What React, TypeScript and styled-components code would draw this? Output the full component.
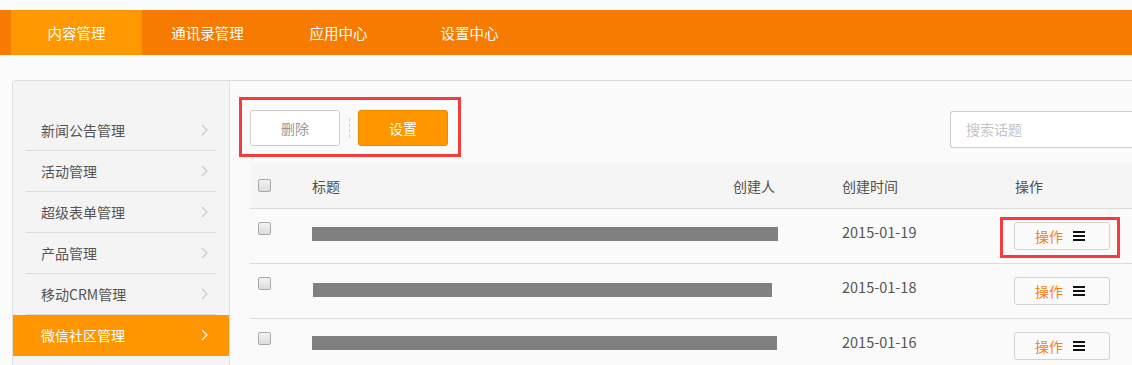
import React from 'react';
import styled, { createGlobalStyle } from 'styled-components';

const GlobalStyle = createGlobalStyle`
  html, body {
    margin: 0;
    padding: 0;
    overflow: hidden;
    background: #fbfbfb;
  }
  * {
    box-sizing: border-box;
  }
  body {
    font-family: "Noto Sans CJK SC", "Noto Sans", sans-serif;
    font-size: 14px;
    color: #555;
  }
`;

const Page = styled.div`
  padding-top: 10px;
  width: 1132px;
  height: 365px;
  overflow: hidden;
`;

const TopBar = styled.nav`
  display: flex;
  height: 45px;
  padding-left: 11px;
  background: #f77b00;
`;

const Tab = styled.div<{ active?: boolean }>`
  display: flex;
  align-items: center;
  justify-content: center;
  width: 131px;
  color: #fff;
  font-size: 14.5px;
  background: ${({ active }) => (active ? '#ff9700' : 'transparent')};
`;

const Panel = styled.div`
  display: flex;
  width: 1140px;
  min-height: 320px;
  margin: 25px 0 0 12px;
  border: 1px solid #dcdcdc;
  border-radius: 4px;
  overflow: hidden;
`;

const Sidebar = styled.aside`
  width: 217px;
  flex-shrink: 0;
  padding-top: 29px;
  background: #f4f4f4;
  border-right: 1px solid #e0e0e0;
`;

const MenuItem = styled.div<{ active?: boolean }>`
  display: flex;
  align-items: center;
  justify-content: space-between;
  height: 41px;
  margin: ${({ active }) => (active ? '0' : '0 13px')};
  padding: ${({ active }) => (active ? '0 21px 0 28px' : '0 8px 0 15px')};
  border-bottom: 1px solid ${({ active }) => (active ? 'transparent' : '#dadada')};
  background: ${({ active }) => (active ? '#ff9600' : 'transparent')};
  color: ${({ active }) => (active ? '#fff' : '#555')};
`;

const Content = styled.main`
  flex: 1;
  padding: 16px 0 0 20px;
  background: #fafafa;
`;

const Toolbar = styled.div`
  display: flex;
  align-items: flex-start;
  height: 60px;
`;

const ButtonGroup = styled.div`
  display: flex;
  align-items: center;
  margin-left: -11px;
  padding: 10px 10px 8px 8px;
  border: 3px solid #f53b3b;
`;

const ToolButton = styled.button<{ primary?: boolean }>`
  width: 90px;
  height: 36px;
  border-radius: 3px;
  font-family: inherit;
  font-size: 14px;
  border: 1px solid ${({ primary }) => (primary ? '#e88a00' : '#cfcfcf')};
  background: ${({ primary }) => (primary ? '#ff9600' : '#fff')};
  color: ${({ primary }) => (primary ? '#fff' : '#999')};
`;

const DashedSep = styled.span`
  width: 0;
  height: 20px;
  margin: 0 8px 0 9px;
  border-left: 1px dashed #ccc;
`;

const SearchInput = styled.input`
  width: 201px;
  height: 37px;
  margin: 14px 0 0 auto;
  padding: 0 15px 2px;
  border: 1px solid #cdcdcd;
  border-right: none;
  border-radius: 3px 0 0 3px;
  background: #fff;
  font-family: inherit;
  font-size: 14px;
  outline: none;
  &::placeholder {
    color: #c4c4c4;
  }
`;

const Table = styled.div`
  margin-top: 6px;
`;

const gridCols = '62px 400px 68px 62px 172px 1fr';

const HeadRow = styled.div`
  display: grid;
  grid-template-columns: ${gridCols};
  align-items: center;
  height: 46px;
  background: #f5f5f5;
  border-bottom: 1px solid #dcdcdc;
  color: #505050;
`;

const Row = styled.div`
  display: grid;
  grid-template-columns: ${gridCols};
  align-items: start;
  height: 55px;
  padding-top: 13px;
  border-bottom: 1px solid #dcdcdc;
`;

const CheckCell = styled.div`
  padding-left: 8px;
  display: flex;
`;

const Checkbox = styled.span`
  display: block;
  width: 13px;
  height: 13px;
  border: 1px solid #a9a9a9;
  border-radius: 2px;
  background: linear-gradient(#f2f2f2, #dcdcdc);
`;

const CreatorHead = styled.div`
  text-align: right;
  padding-right: 5px;
`;

const DateHead = styled.div`
  grid-column: 5;
`;

const OpHead = styled.div`
  padding-left: 1px;
`;

const Redacted = styled.div<{ offset: number; inset: number }>`
  grid-column: 2 / 4;
  height: 14px;
  margin-top: ${({ offset }) => offset}px;
  margin-left: ${({ inset }) => inset}px;
  background: #808080;
`;

const DateCell = styled.div`
  grid-column: 5;
  line-height: 20px;
  font-size: 14.5px;
  color: #555;
`;

const OpCell = styled.div`
  position: relative;
`;

const OpButton = styled.div`
  display: flex;
  align-items: center;
  justify-content: center;
  gap: 10px;
  width: 96px;
  height: 28px;
  padding-right: 4px;
  border: 1px solid #d2d2d2;
  border-radius: 3px;
  color: #f7810f;
  font-size: 14px;
`;

const OpHighlight = styled.div`
  position: absolute;
  left: -14px;
  top: -5px;
  width: 120px;
  height: 41px;
  border: 3px solid #f53b3b;
  pointer-events: none;
`;

const Chevron = ({ color }: { color: string }) => (
  <svg width="7" height="12" viewBox="0 0 7 12">
    <polyline points="1,1 6,6 1,11" fill="none" stroke={color} strokeWidth="1.1" />
  </svg>
);

const Hamburger = () => (
  <svg width="12" height="10" viewBox="0 0 12 10">
    <rect x="0" y="0" width="12" height="2" fill="#111" />
    <rect x="0" y="4" width="12" height="2" fill="#111" />
    <rect x="0" y="8" width="12" height="2" fill="#111" />
  </svg>
);

const tabs = ['内容管理', '通讯录管理', '应用中心', '设置中心'];
const menu = ['新闻公告管理', '活动管理', '超级表单管理', '产品管理', '移动CRM管理', '微信社区管理'];
const rows = [
  { date: '2015-01-19', offset: 5, inset: 0, width: 466, highlight: true },
  { date: '2015-01-18', offset: 6, inset: 1, width: 459, highlight: false },
  { date: '2015-01-16', offset: 4, inset: 0, width: 465, highlight: false },
];

export default function App() {
  return (
    <Page>
      <GlobalStyle />
      <TopBar>
        {tabs.map((t, i) => (
          <Tab key={t} active={i === 0}>
            {t}
          </Tab>
        ))}
      </TopBar>
      <Panel>
        <Sidebar>
          {menu.map((m, i) => {
            const active = i === menu.length - 1;
            return (
              <MenuItem key={m} active={active}>
                <span>{m}</span>
                <Chevron color={active ? '#fff' : '#c9c9c9'} />
              </MenuItem>
            );
          })}
        </Sidebar>
        <Content>
          <Toolbar>
            <ButtonGroup>
              <ToolButton>删除</ToolButton>
              <DashedSep />
              <ToolButton primary>设置</ToolButton>
            </ButtonGroup>
            <SearchInput placeholder="搜索话题" />
          </Toolbar>
          <Table>
            <HeadRow>
              <CheckCell>
                <Checkbox />
              </CheckCell>
              <div>标题</div>
              <CreatorHead>创建人</CreatorHead>
              <DateHead>创建时间</DateHead>
              <OpHead>操作</OpHead>
            </HeadRow>
            {rows.map(r => (
              <Row key={r.date}>
                <CheckCell>
                  <Checkbox />
                </CheckCell>
                <Redacted offset={r.offset} inset={r.inset} style={{ width: r.width }} />
                <DateCell>{r.date}</DateCell>
                <OpCell>
                  <OpButton>
                    <span>操作</span>
                    <Hamburger />
                  </OpButton>
                  {r.highlight && <OpHighlight />}
                </OpCell>
              </Row>
            ))}
          </Table>
        </Content>
      </Panel>
    </Page>
  );
}
